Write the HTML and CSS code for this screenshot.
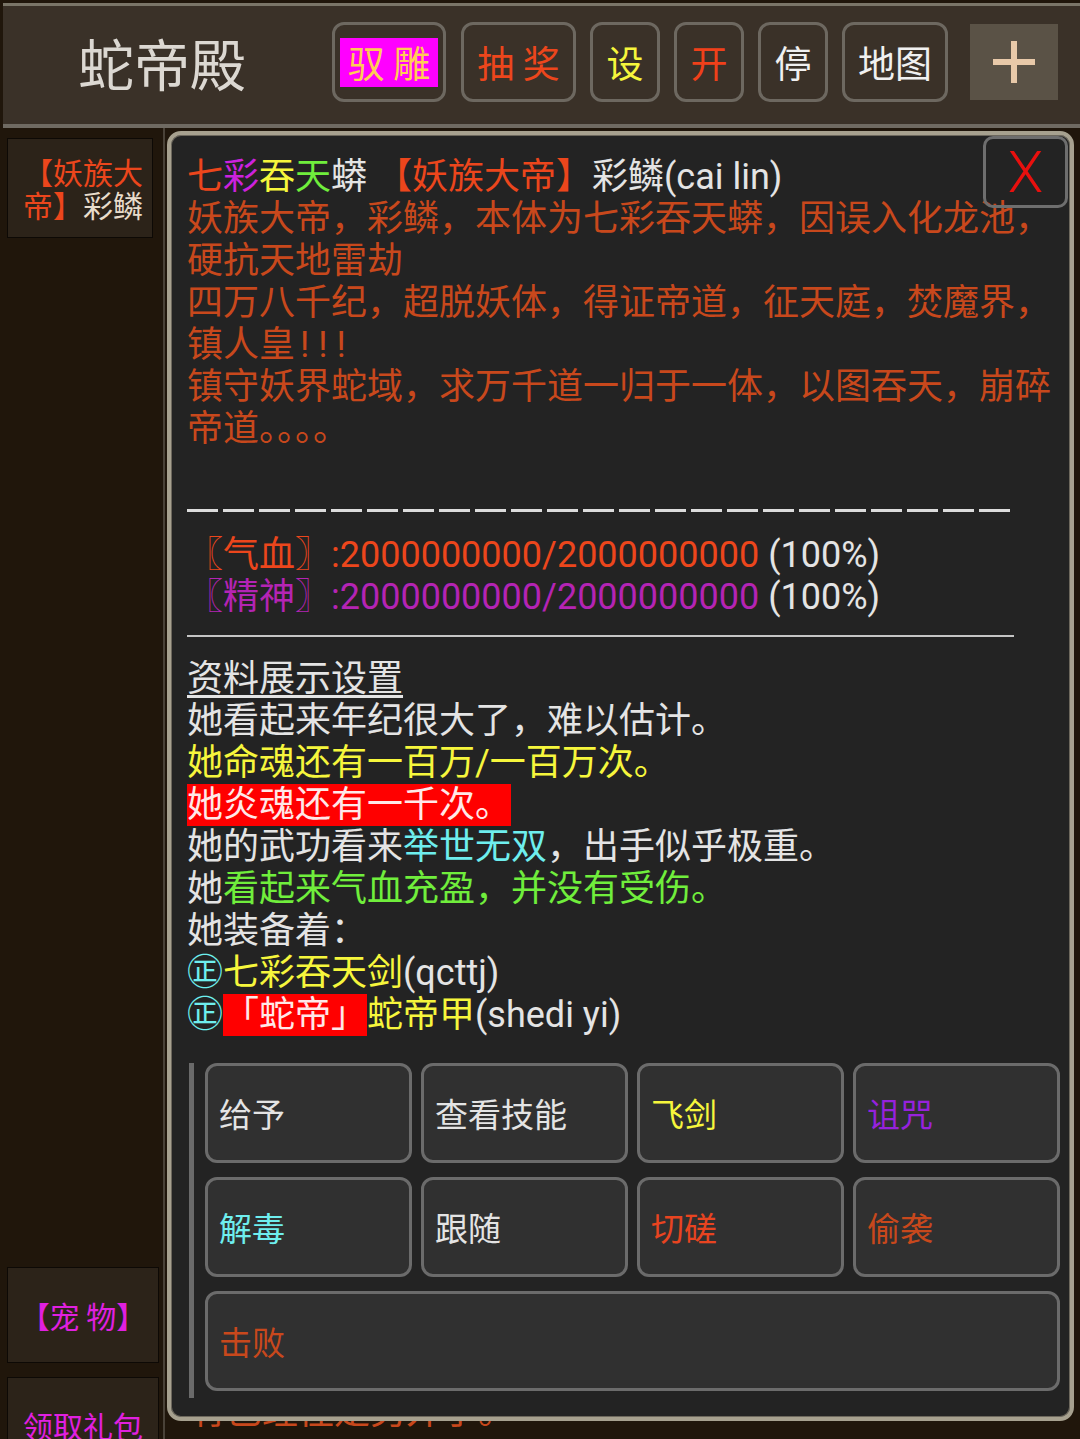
FILE: index.html
```html
<!DOCTYPE html>
<html lang="zh-CN">
<head>
  <meta charset="UTF-8">
  <meta name="viewport" content="width=device-width, initial-scale=1.0">
  <title>蛇帝殿</title>
  <link rel="stylesheet" href="styles.css">
</head>
<body>
  <div class="topbar">
    <div class="room-title">蛇帝殿</div>
    <div class="top-buttons">
      <div class="top-btn btn-ride"><span>驭 雕</span></div>
      <div class="top-btn btn-wide c-orange">抽 奖</div>
      <div class="top-btn c-yellow">设</div>
      <div class="top-btn c-red">开</div>
      <div class="top-btn">停</div>
      <div class="top-btn btn-map">地图</div>
    </div>
    <div class="plus-btn">
      <svg width="44" height="44" viewBox="0 0 44 44">
        <path d="M22 1 V43 M1 22 H43" stroke="#e8c9a9" stroke-width="6" fill="none"/>
      </svg>
    </div>
  </div>

  <div class="main">
    <div class="sidebar">
      <div class="side-item side-npc"><span class="c-orange">【妖族大帝】</span>彩鳞</div>
      <div class="side-bottom">
        <div class="side-item side-pet">【宠 物】</div>
        <div class="side-item side-gift">领取礼包</div>
      </div>
    </div>

    <div class="room">
      <p class="room-desc">有已经往是另外了。</p>

      <div class="dialog">
        <div class="close-btn">X</div>

        <div class="line">
          <span class="c-orange">七</span><span class="c-magenta">彩</span><span class="c-yellow">吞</span><span class="c-green">天</span><span class="c-white">蟒</span>
          <span class="c-orange">【妖族大帝】</span><span class="c-white">彩鳞(cai lin)</span>
        </div>
        <div class="desc">妖族大帝，彩鳞，本体为七彩吞天蟒，因误入化龙池，硬抗天地雷劫</div>
        <div class="desc">四万八千纪，超脱妖体，得证帝道，征天庭，焚魔界，镇人皇<span class="bang">!!!</span></div>
        <div class="desc">镇守妖界蛇域，求万千道一归于一体，以图吞天，崩碎帝道。。。。</div>
        <div class="line">&nbsp;</div>
        <div class="line dashes"></div>

        <div class="line c-orange">〖气血〗:2000000000/2000000000 <span class="c-white">(100%)</span></div>
        <div class="line c-purple">〖精神〗:2000000000/2000000000 <span class="c-white">(100%)</span></div>
        <div class="rule"></div>

        <div class="line"><span class="underline">资料展示设置</span></div>
        <div class="line">她看起来年纪很大了，难以估计。</div>
        <div class="line c-yellow">她命魂还有一百万/一百万次。</div>
        <div class="line"><span class="hl">她炎魂还有一千次。</span></div>
        <div class="line">她的武功看来<span class="c-cyan">举世无双</span>，出手似乎极重。</div>
        <div class="line">她<span class="c-green">看起来气血充盈，并没有受伤。</span></div>
        <div class="line">她装备着：</div>
        <div class="line"><span class="c-cyan">㊣</span><span class="c-yellow">七彩吞天剑</span>(qcttj)</div>
        <div class="line"><span class="c-cyan">㊣</span><span class="hl">「蛇帝」</span><span class="c-yellow">蛇帝甲</span>(shedi yi)</div>

        <div class="actions">
          <div class="act">给予</div>
          <div class="act">查看技能</div>
          <div class="act c-yellow">飞剑</div>
          <div class="act c-violet">诅咒</div>
          <div class="act c-cyan">解毒</div>
          <div class="act">跟随</div>
          <div class="act c-red">切磋</div>
          <div class="act c-brown">偷袭</div>
          <div class="act act-wide c-brown">击败</div>
        </div>
      </div>
    </div>
  </div>
</body>
</html>
```

FILE: styles.css
```css
* {
  box-sizing: border-box;
}
html, body {
  margin: 0;
}
body {
  width: 1080px;
  height: 1439px;
  overflow: hidden;
  background: #20160b;
  color: #e4e4e4;
  font-family: Roboto, "Noto Sans CJK SC", sans-serif;
}

/* top bar */
.topbar {
  display: flex;
  align-items: flex-start;
  height: 125px;
  margin: 3px 0 0 3px;
  padding: 16px 0 0 75px;
  background: #3a3128;
  border-top: 3px solid #7a7568;
  border-bottom: 4px solid #6f6a62;
}
.room-title {
  width: 254px;
  font-family: "Noto Sans CJK SC", sans-serif;
  font-size: 56px;
  line-height: 80px;
  color: #dcd8d2;
}
.top-buttons {
  display: flex;
  gap: 14px;
}
.top-btn {
  width: 70px;
  height: 80px;
  border: 3px solid #6d6860;
  border-radius: 12px;
  font-family: "Noto Sans CJK SC", sans-serif;
  font-size: 37px;
  line-height: 74px;
  text-align: center;
  white-space: nowrap;
  color: #f0f0f0;
}
.btn-ride {
  display: flex;
  align-items: center;
  justify-content: center;
  width: 114px;
  margin-right: 1px;
}
.btn-ride span {
  width: 98px;
  background: #ff00ff;
  color: #ffcc55;
  line-height: 49px;
}
.btn-wide {
  width: 115px;
}
.btn-map {
  width: 106px;
}
.plus-btn {
  display: flex;
  align-items: center;
  justify-content: center;
  width: 88px;
  height: 76px;
  margin: 2px 0 0 22px;
  background: #5a5246;
}

/* colours */
.c-orange { color: #ec461c; }
.c-yellow { color: #f6f63c; }
.c-red { color: #f0401a; }
.c-magenta { color: #cc22dd; }
.c-green { color: #70ee3c; }
.c-white { color: #e4e4e4; }
.c-purple { color: #b424b4; }
.c-cyan { color: #6eeeee; }
.c-violet { color: #9622dc; }
.c-brown { color: #c8481c; }

/* main */
.main {
  display: flex;
  height: 1311px;
}
.sidebar {
  width: 165px;
  flex-shrink: 0;
  padding: 10px 0 0 7px;
  border-right: 2px solid #4a4238;
  overflow: hidden;
}
.side-item {
  background: #2c2319;
  border: 1px solid #0d0905;
  font-family: "Noto Sans CJK SC", sans-serif;
  font-size: 30px;
}
.side-npc {
  width: 146px;
  height: 100px;
  padding: 16px 0 0 15px;
  line-height: 33px;
  color: #e8dccb;
}
.side-bottom {
  margin-top: 1029px;
}
.side-pet,
.side-gift {
  display: flex;
  align-items: center;
  justify-content: center;
  width: 152px;
  height: 96px;
  color: #e020e0;
}
.side-gift {
  margin-top: 14px;
}

.room {
  flex: 1;
  position: relative;
}
.room-desc {
  margin: 1263px 0 0 25px;
  font-size: 36px;
  line-height: 42px;
  color: #c8481c;
}

/* dialog */
.dialog {
  position: absolute;
  left: 2px;
  top: 3px;
  width: 907px;
  height: 1290px;
  padding: 21px 10px 0 16px;
  background: #232323;
  border: 4px solid #a7a18f;
  border-radius: 14px;
  box-shadow: inset 0 0 0 1px #6d685d;
  font-size: 36px;
  line-height: 42px;
}
.close-btn {
  position: absolute;
  top: 1px;
  right: 2px;
  width: 85px;
  height: 72px;
  display: flex;
  align-items: center;
  justify-content: center;
  border: 3px solid #6e6e6e;
  border-radius: 10px;
  font-size: 58px;
  font-weight: 300;
  color: #e8100e;
}
.desc {
  color: #c8481c;
}
.bang {
  letter-spacing: 9px;
  padding-left: 5px;
}
.dashes {
  width: 828px;
  height: 42px;
  background: repeating-linear-gradient(90deg, #dcdcdc 0 31px, transparent 31px 36px) 0 17px / 828px 3px no-repeat;
}
.rule {
  width: 827px;
  height: 2px;
  margin: 17px 0 21px;
  background: #c4c4c4;
}
.underline {
  text-decoration: underline;
  text-underline-offset: 4px;
}
.hl {
  display: inline-block;
  background: #ff0000;
  color: #ffe8e8;
  line-height: 42px;
}

/* action buttons */
.actions {
  display: grid;
  grid-template-columns: repeat(4, 1fr);
  column-gap: 9px;
  row-gap: 14px;
  margin: 27px 0 0 2px;
  padding: 0 0 7px 11px;
  border-left: 5px solid #6a6a6a;
}
.act {
  display: flex;
  align-items: center;
  height: 100px;
  padding-left: 11px;
  background: #303030;
  border: 3px solid #6b6b6b;
  border-radius: 12px;
  font-family: "Noto Sans CJK SC", sans-serif;
  font-size: 33px;
  color: #e4e4e4;
}
.act.c-yellow { color: #f6f63c; }
.act.c-violet { color: #9622dc; }
.act.c-cyan { color: #6eeeee; }
.act.c-red { color: #e84420; }
.act.c-brown { color: #c8481c; }
.act-wide {
  grid-column: 1 / -1;
}
```
